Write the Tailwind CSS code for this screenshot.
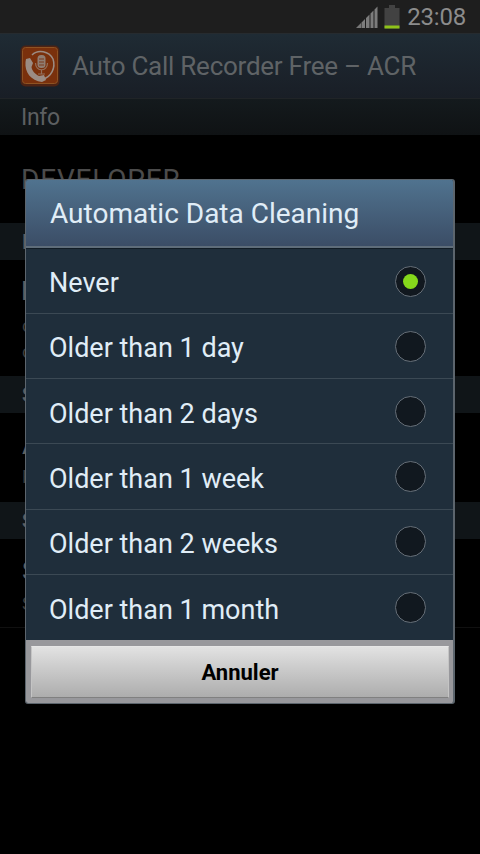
<!DOCTYPE html>
<html lang="en">
<head>
  <meta charset="UTF-8" />
  <meta name="viewport" content="width=device-width, initial-scale=1.0" />
  <title>Auto Call Recorder Free – ACR</title>
  <script src="https://cdn.jsdelivr.net/npm/@tailwindcss/browser@4"></script>
</head>
<body class="bg-black font-['Roboto',sans-serif] overflow-hidden">
  <div class="relative w-[480px] h-[854px] overflow-hidden bg-black text-[#5c5f61] whitespace-nowrap">
    <!-- Status bar -->
    <div class="flex items-center justify-end h-[33px] bg-[#1e1e1e] pr-[14px]">
      <svg class="w-6 h-6 mr-1 -translate-x-px" viewBox="0 0 24 24">
        <path d="M1 23L6 18V23Z" fill="#777" />
        <path d="M6.500 17.500L10 14V23H6.500ZM11 13L14.500 9.500V23H11ZM15.500 8.500L18.500 5.500V23H15.500ZM19.500 4.500L22.500 1.500V23H19.500Z" fill="#7c7c7c" />
      </svg>
      <svg class="w-4 h-6 mr-[7px]" viewBox="0 0 16 24">
        <path d="M5 0H11V3H15.500V23.500H0.500V3H5Z" fill="#424242" />
        <path d="M0.500 20.500H15.500V23.500H0.500Z" fill="#8fc31a" />
      </svg>
      <span class="text-2xl text-[#8c8c8c] tracking-[-0.2px]">23:08</span>
    </div>

    <!-- App header -->
    <div class="flex items-center h-[65px] pl-5 bg-linear-to-b from-[#1f2b34] to-[#191e26] border-t border-[#262b2f]">
      <svg class="w-10 h-[42px] mr-3" viewBox="0 0 40 42">
        <rect x="0.500" y="0.500" width="39" height="41" rx="5" fill="#4d2314" />
        <rect x="2.500" y="2.500" width="35" height="36" rx="3" fill="#7a300c" stroke="#8e5222" />
        <path d="M12 10C18 4 29 6 33 14C36 23 31 32 23 34" fill="none" stroke="#9b8c84" stroke-width="1.500" />
        <path d="M5.500 17C4.500 27 11 36 22 37L26 35L24 30L19 31C15 29 12 26 11.500 22L13 18L10 13L6 14Z" fill="#9b8c84" />
        <rect x="17.500" y="10" width="8" height="13" rx="3.500" fill="#8f7d72" />
        <path d="M19 14H24M19 17H24M19 20H24" stroke="#7a3b1c" />
        <path d="M15.500 18C15.500 27 27.500 27 27.500 18M21.500 25V29M18 29H25" fill="none" stroke="#94705c" stroke-width="1.200" />
      </svg>
      <span class="text-[26px] text-[#5f6366] tracking-[-0.25px]">Auto Call Recorder Free – ACR</span>
    </div>
    <div class="flex items-center h-[37px] pl-[21px] pt-[2px] bg-linear-to-b from-[#141a1d] to-[#0f1214] border-t border-[#202427] text-[23px] tracking-[-0.3px]">Info</div>

    <!-- Preferences list, only its left edge shows beside the dialog -->
    <div class="h-[88px] pt-[28px] pl-[21px] text-[28px] leading-[34px] tracking-[0.8px] text-[#4b4b4b]">DEVELOPER</div>
    <div class="flex items-center h-[37px] pl-[22px] bg-[#101518] text-xl font-bold">I</div>
    <div class="h-[116px] pl-[21px] pt-[13px]">
      <div class="text-[26px] leading-[36px]">R</div>
      <div class="pl-px pt-[4px] text-lg leading-[26px] text-[#3c3c3c]">c<br />c</div>
    </div>
    <div class="flex items-center h-[37px] pl-[22px] bg-[#101518] text-xl font-bold">S</div>
    <div class="h-[89px] pl-[22px] pt-[14px]">
      <div class="text-[26px] leading-[36px]">A</div>
      <div class="text-lg leading-[28px] text-[#3c3c3c]">F</div>
    </div>
    <div class="flex items-center h-[37px] pl-[22px] bg-[#101518] text-xl font-bold">S</div>
    <div class="h-[89px] pl-[22px] pt-[14px] border-b border-[#101010]">
      <div class="text-[26px] leading-[36px]">S</div>
      <div class="text-lg leading-[30px] text-[#3c3c3c]">S</div>
    </div>

    <!-- Dialog -->
    <div class="absolute left-[25px] top-[179px] w-[430px] h-[525px] flex flex-col rounded-[3px] overflow-hidden border border-r-2 border-[#5c656d] bg-[#1f2e3b] text-[#e0edf7]">
      <div class="flex items-center h-[66px] shrink-0 pl-6 pt-px bg-linear-to-b from-[#50738f] to-[#3b4d66] text-[28px]">Automatic Data Cleaning</div>
      <div class="h-[3px] shrink-0 bg-[#5f6d7a] border-b border-[#111c25]"></div>
      <ul class="grid grid-rows-6 h-[391px] shrink-0 text-[27px] divide-y divide-[#3b4954]">
        <li class="flex items-center justify-between pl-[23px] pr-[27px]">
          <span class="pt-[5px]">Never</span>
          <span class="flex items-center justify-center size-[31px] rounded-full border-[1.500px] border-[#666f78] bg-[#11181f]"><span class="size-[15px] rounded-full bg-[#85d81b]"></span></span>
        </li>
        <li class="flex items-center justify-between pl-[23px] pr-[27px]">
          <span class="pt-[5px]">Older than 1 day</span>
          <span class="size-[31px] rounded-full border-[1.500px] border-[#666f78] bg-[#11181f]"></span>
        </li>
        <li class="flex items-center justify-between pl-[23px] pr-[27px]">
          <span class="pt-[5px]">Older than 2 days</span>
          <span class="size-[31px] rounded-full border-[1.500px] border-[#666f78] bg-[#11181f]"></span>
        </li>
        <li class="flex items-center justify-between pl-[23px] pr-[27px]">
          <span class="pt-[5px]">Older than 1 week</span>
          <span class="size-[31px] rounded-full border-[1.500px] border-[#666f78] bg-[#11181f]"></span>
        </li>
        <li class="flex items-center justify-between pl-[23px] pr-[27px]">
          <span class="pt-[5px]">Older than 2 weeks</span>
          <span class="size-[31px] rounded-full border-[1.500px] border-[#666f78] bg-[#11181f]"></span>
        </li>
        <li class="flex items-center justify-between pl-[23px] pr-[27px]">
          <span class="pt-[5px]">Older than 1 month</span>
          <span class="size-[31px] rounded-full border-[1.500px] border-[#666f78] bg-[#11181f]"></span>
        </li>
      </ul>
      <div class="flex-1 bg-[#98989c] pl-[5px] pr-[4px] pt-[6px]">
        <button class="w-full h-[52px] pt-px border border-t-[#e6e6e6] border-x-[#c4c4c4] border-b-[#808080] bg-linear-to-b from-[#e2e2e2] to-[#adadad] text-[22px] font-bold text-black">Annuler</button>
      </div>
    </div>
  </div>
</body>
</html>
